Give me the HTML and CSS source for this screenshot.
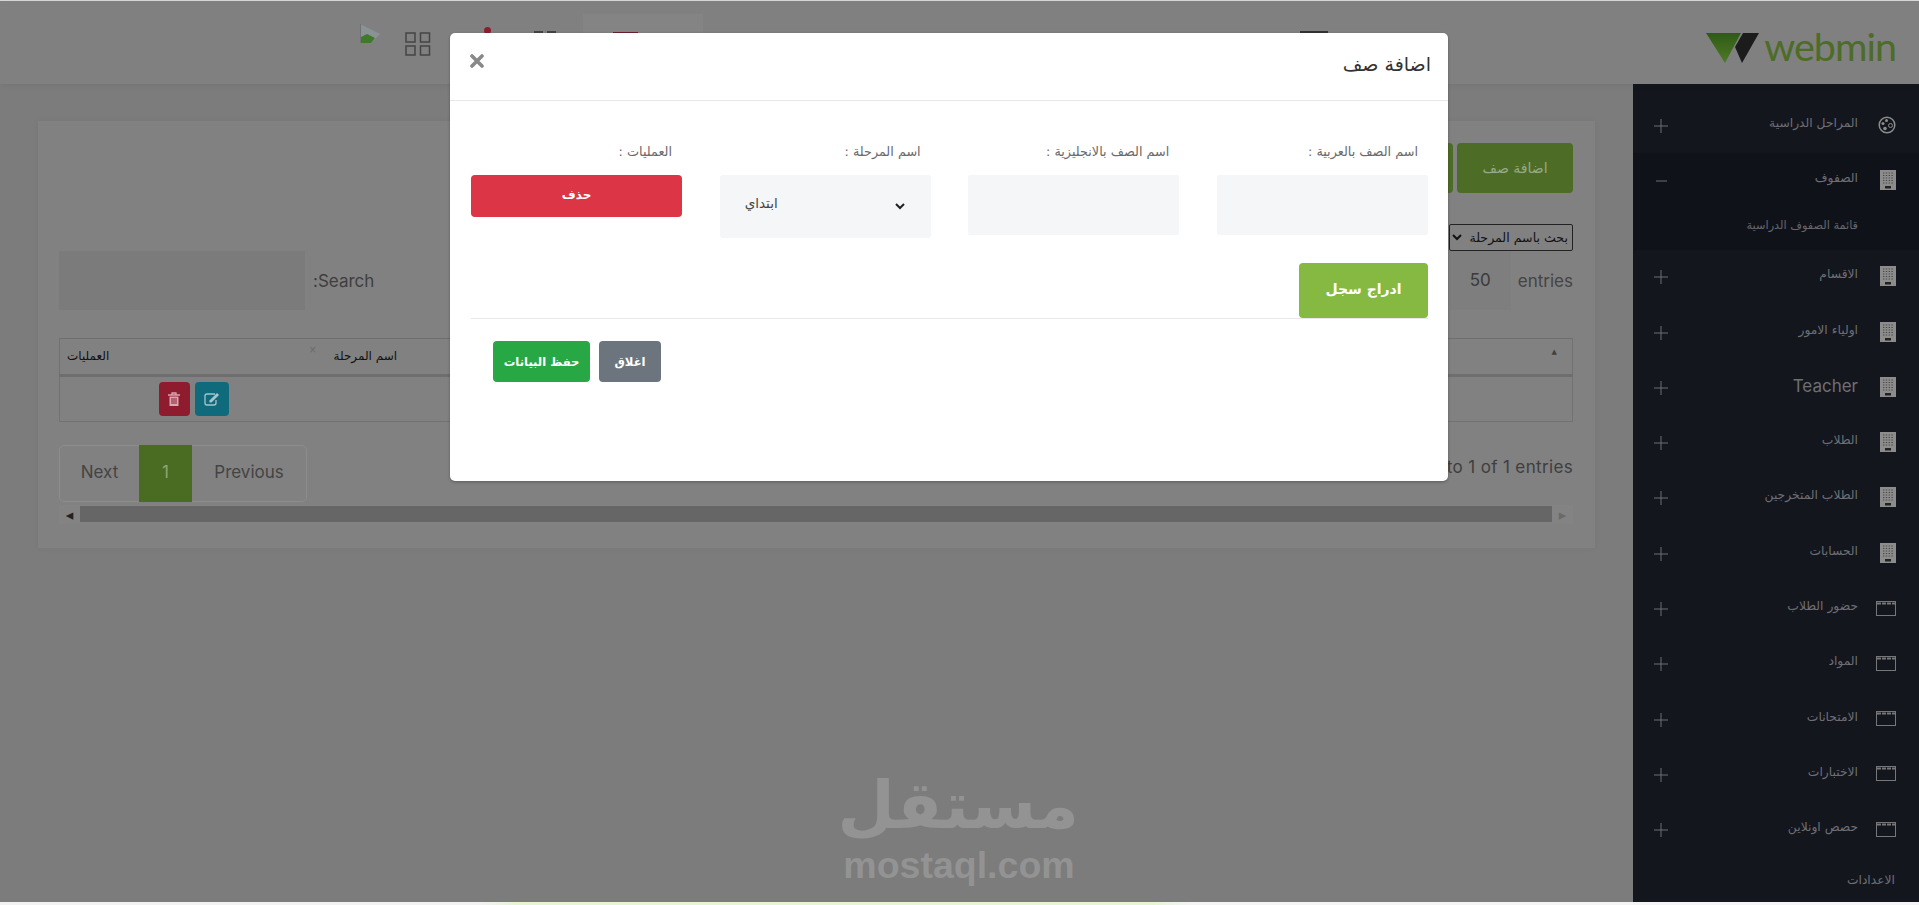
FILE: index.html
```html
<!DOCTYPE html>
<html lang="ar" dir="rtl">
<head>
  <meta charset="UTF-8" />
  <title>webmin</title>
  <link rel="stylesheet" href="styles.css">
</head>
<body>

<svg class="sprite" width="0" height="0">
  <symbol id="i-building" viewBox="0 0 16 20">
    <rect width="16" height="20" fill="#8c8c8c"/>
    <path d="M3 3h10M3 5.500h10M3 8h10M3 10.500h10M3 13h10" stroke="#4a4a4a" stroke-width="1.200" stroke-dasharray="1.400 1.400"/>
    <rect x="5" y="16" width="6" height="2.500" fill="#222"/>
  </symbol>
  <symbol id="i-window" viewBox="0 0 20 15">
    <rect x=".5" y=".5" width="19" height="14" fill="none" stroke="#77777a"/>
    <path d="M1 2.500h18" stroke="#77777a" stroke-width="2" stroke-dasharray="4 1"/>
  </symbol>
  <symbol id="i-palette" viewBox="0 0 18 18">
    <circle cx="9" cy="9" r="7.800" fill="none" stroke="#8c8c8c" stroke-width="1.500"/>
    <circle cx="5" cy="7.500" r="1.500" fill="#8c8c8c"/>
    <circle cx="8.500" cy="4.500" r="1.500" fill="#8c8c8c"/>
    <circle cx="12.500" cy="9.500" r="2" fill="none" stroke="#8c8c8c"/>
    <circle cx="7" cy="12.500" r="1.800" fill="#8c8c8c"/>
  </symbol>
  <symbol id="i-plus" viewBox="0 0 14 14">
    <path d="M0 7h14M7 0v14" stroke="#6e6f73" stroke-width="1"/>
  </symbol>
  <symbol id="i-minus" viewBox="0 0 14 14">
    <path d="M2 7h11" stroke="#6e6f73" stroke-width="1"/>
  </symbol>
</svg>

<div class="top-edge"></div>

<header class="topbar">
  <a class="logo">
    <svg class="logo-mark" width="54" height="31" viewBox="0 0 54 31">
      <defs>
        <linearGradient id="g-green" x1="0" y1="0" x2="0" y2="1">
          <stop offset="0" stop-color="#2f5a14"/>
          <stop offset="1" stop-color="#4f7a28"/>
        </linearGradient>
      </defs>
      <path d="M0 0H35L19 30Z" fill="url(#g-green)"/>
      <path d="M37 0H53L36 30L29 14Z" fill="#1c1c1c"/>
    </svg>
    <span class="logo-text">webmin</span>
  </a>
  <span class="top-dark"></span>
  <div class="top-box"><span class="top-red"></span></div>
  <span class="top-squares"></span>
  <span class="top-dot"></span>
  <svg class="top-grid" width="26" height="24" viewBox="0 0 26 24">
    <path d="M1 1h9v9H1zM15.500 1h9v9h-9zM1 14h9v9H1zM15.500 14h9v9h-9z" fill="none" stroke="#444" stroke-width="1.500"/>
  </svg>
  <svg class="top-broken" width="20" height="20" viewBox="0 0 20 20">
    <path d="M0 0L20 10L11 19H0Z" fill="#8a9296"/>
    <path d="M1 19V13L7 10L15 14L11 19Z" fill="#3f7a2a"/>
    <path d="M0 0V19" stroke="#555" stroke-width="1"/>
  </svg>
</header>

<div class="layout">
  <aside class="sidebar">
    <ul class="menu">
      <li class="menu-item"><svg class="ico ico-round"><use href="#i-palette"/></svg><span class="menu-label">المراحل الدراسية</span><svg class="toggle"><use href="#i-plus"/></svg></li>
      <li class="menu-group">
        <div class="menu-item"><svg class="ico"><use href="#i-building"/></svg><span class="menu-label">الصفوف</span><svg class="toggle"><use href="#i-minus"/></svg></div>
        <div class="submenu">قائمة الصفوف الدراسية</div>
      </li>
      <li class="menu-item"><svg class="ico"><use href="#i-building"/></svg><span class="menu-label">الاقسام</span><svg class="toggle"><use href="#i-plus"/></svg></li>
      <li class="menu-item"><svg class="ico"><use href="#i-building"/></svg><span class="menu-label">اولياء الامور</span><svg class="toggle"><use href="#i-plus"/></svg></li>
      <li class="menu-item"><svg class="ico"><use href="#i-building"/></svg><span class="menu-label menu-latin">Teacher</span><svg class="toggle"><use href="#i-plus"/></svg></li>
      <li class="menu-item"><svg class="ico"><use href="#i-building"/></svg><span class="menu-label">الطلاب</span><svg class="toggle"><use href="#i-plus"/></svg></li>
      <li class="menu-item"><svg class="ico"><use href="#i-building"/></svg><span class="menu-label">الطلاب المتخرجين</span><svg class="toggle"><use href="#i-plus"/></svg></li>
      <li class="menu-item"><svg class="ico"><use href="#i-building"/></svg><span class="menu-label">الحسابات</span><svg class="toggle"><use href="#i-plus"/></svg></li>
      <li class="menu-item"><svg class="ico ico-wide"><use href="#i-window"/></svg><span class="menu-label">حضور الطلاب</span><svg class="toggle"><use href="#i-plus"/></svg></li>
      <li class="menu-item"><svg class="ico ico-wide"><use href="#i-window"/></svg><span class="menu-label">المواد</span><svg class="toggle"><use href="#i-plus"/></svg></li>
      <li class="menu-item"><svg class="ico ico-wide"><use href="#i-window"/></svg><span class="menu-label">الامتحانات</span><svg class="toggle"><use href="#i-plus"/></svg></li>
      <li class="menu-item"><svg class="ico ico-wide"><use href="#i-window"/></svg><span class="menu-label">الاختبارات</span><svg class="toggle"><use href="#i-plus"/></svg></li>
      <li class="menu-item"><svg class="ico ico-wide"><use href="#i-window"/></svg><span class="menu-label">حصص اونلاين</span><svg class="toggle"><use href="#i-plus"/></svg></li>
      <li class="menu-plain">الاعدادات</li>
    </ul>
  </aside>

  <main class="content">
    <section class="card">
      <div class="card-actions">
        <button class="btn-add">اضافة صف</button>
        <button class="btn-add btn-add-2">استيراد</button>
      </div>

      <div class="filter-row">
        <select class="filter-select">
          <option>بحث باسم المرحلة</option>
        </select>
      </div>

      <div class="table-tools">
        <div class="length">
          <span>entries</span>
          <span class="length-value">50</span>
          <span>Show</span>
        </div>
        <label class="search">Search:<span class="search-box"></span></label>
      </div>

      <table class="grid">
        <thead>
          <tr>
            <th>اسم الصف<span class="sort sort-up">▲</span></th>
            <th>اسم الصف بالانجليزية</th>
            <th class="col-stage">اسم المرحلة<span class="sort">×</span></th>
            <th class="col-ops">العمليات</th>
          </tr>
        </thead>
        <tbody>
          <tr>
            <td></td>
            <td></td>
            <td class="col-stage"></td>
            <td class="col-ops">
              <div class="row-actions">
                <button class="icon-btn icon-edit">
                  <svg width="16" height="14" viewBox="0 0 16 14"><path d="M11 2H3a2 2 0 0 0-2 2v7a2 2 0 0 0 2 2h7a2 2 0 0 0 2-2V8" fill="none" stroke="#a8c4cc" stroke-width="1.300"/><path d="M5.500 8.500L13 1l2 2L7.500 10.500H5.500Z" fill="#a8c4cc"/></svg>
                </button>
                <button class="icon-btn icon-del">
                  <svg width="12" height="14" viewBox="0 0 12 14"><path d="M0 3h12M4 3V1h4v2" fill="none" stroke="#d8a8b0" stroke-width="1.300"/><path d="M1.500 4.500h9V14h-9z" fill="#d8a8b0"/><path d="M4 6v6M6 6v6M8 6v6" stroke="#8f1b2e" stroke-width="1"/></svg>
                </button>
              </div>
            </td>
          </tr>
        </tbody>
      </table>

      <div class="table-foot">
        <div class="info">Showing 1 to 1 of 1 entries</div>
        <div class="pager">
          <a class="page-link">Previous</a>
          <a class="page-link page-active">1</a>
          <a class="page-link">Next</a>
        </div>
      </div>

      <div class="hscroll">
        <span class="hscroll-arrow">▸</span>
        <span class="hscroll-thumb"></span>
        <span class="hscroll-arrow hscroll-dark">◂</span>
      </div>
    </section>
  </main>
</div>

<div class="bottom-edge"></div>

<div class="watermark">
  <div class="wm-ar">مستقل</div>
  <div class="wm-en">mostaql.com</div>
</div>

<div class="modal">
  <div class="modal-head">
    <h4 class="modal-title">اضافة صف</h4>
    <svg class="modal-close" width="14" height="14" viewBox="0 0 14 14"><path d="M2 2L12 12M12 2L2 12" stroke="#888" stroke-width="3.600" stroke-linecap="round"/></svg>
  </div>

  <div class="modal-body">
    <div class="form-row">
      <div class="field">
        <label>اسم الصف بالعربية :</label>
        <input type="text" class="input">
      </div>
      <div class="field">
        <label>اسم الصف بالانجليزية :</label>
        <input type="text" class="input">
      </div>
      <div class="field">
        <label>اسم المرحلة :</label>
        <div class="stage-wrap">
          <select class="stage" dir="ltr"><option>ابتداي</option></select>
          <svg class="stage-arrow" width="10" height="7" viewBox="0 0 10 7"><path d="M1 1L5 5L9 1" fill="none" stroke="#222" stroke-width="2"/></svg>
        </div>
      </div>
      <div class="field">
        <label>العمليات :</label>
        <button class="btn-delete">حذف</button>
      </div>
    </div>

    <div class="insert-row">
      <button class="btn-insert">ادراج سجل</button>
    </div>
  </div>

  <div class="modal-foot">
    <button class="btn btn-grey">اغلاق</button>
    <button class="btn btn-green">حفظ البيانات</button>
  </div>
</div>

</body>
</html>
```

FILE: styles.css
```css
* {
  box-sizing: border-box;
}

html, body {
  height: 100%;
}

body {
  margin: 0;
  display: flex;
  flex-direction: column;
  height: 905px;
  overflow: hidden;
  position: relative;
  background: #7c7c7c;
  color: #3c3c3c;
  font-family: "DejaVu Sans", sans-serif;
}

button, select, input {
  font-family: inherit;
}

.sprite {
  position: absolute;
}

.top-edge {
  height: 1px;
  background: #d8d8d8;
}

.bottom-edge {
  height: 3px;
  background: linear-gradient(to right, #f2f2f2 25%, #e6f5d3 27%, #e6f5d3 60%, #f4f4f4 62%);
}

/* header */
.topbar {
  height: 83px;
  flex: none;
  display: flex;
  align-items: flex-start;
  padding-right: 23px;
  background: #808080;
  box-shadow: 0 2px 6px rgba(0,0,0,.06);
  position: relative;
}

.logo {
  display: flex;
  flex-direction: row-reverse;
  justify-content: flex-end;
  align-items: flex-start;
  width: 189px;
  margin-top: 24px;
  gap: 4px;
}

.logo-mark {
  margin-top: 8px;
  flex: none;
}

.logo-text {
  font-family: "Lato", sans-serif;
  font-size: 39.500px;
  line-height: 42px;
  letter-spacing: -1px;
  color: #4c6c28;
  direction: ltr;
}

.top-dark {
  width: 28px;
  height: 20px;
  margin: 30px 379px 0 0;
  background: #333;
}

.top-box {
  width: 120px;
  height: 50px;
  margin: 13px 597px 0 0;
  padding: 18px 65px 0 0;
  background: #848484;
}

.top-red {
  display: block;
  width: 25px;
  height: 20px;
  background: #6c1f2c;
}

.top-squares {
  width: 22px;
  height: 4px;
  margin: 30px 27px 0 0;
  background: linear-gradient(to right, #444 9px, transparent 9px, transparent 13px, #444 13px);
}

.top-dot {
  width: 7px;
  height: 7px;
  margin: 26px 43px 0 0;
  border-radius: 50%;
  background: #8f1b2e;
}

.top-grid {
  margin: 31px 53px 0 0;
}

.top-broken {
  margin: 23px 25px 0 0;
}

.layout {
  flex: 1;
  display: flex;
  min-height: 0;
}

/* sidebar */
.sidebar {
  width: 286px;
  flex: none;
  background: #14161e;
  padding-top: 14px;
  overflow: hidden;
}

.menu {
  list-style: none;
  margin: 0;
  padding: 0;
}

.menu-item {
  height: 55.300px;
  display: flex;
  align-items: center;
  padding: 0 23px 0 0;
}

.ico {
  width: 16px;
  height: 20px;
  flex: none;
  margin-bottom: 2px;
}

.ico-round {
  width: 18px;
  height: 18px;
}

.ico-wide {
  width: 20px;
  height: 15px;
}

.menu-label {
  flex: 1;
  margin-right: 22px;
  padding-bottom: 6px;
  font-size: 12.300px;
  color: #6e6f75;
}

.ico-round + .menu-label {
  margin-right: 20px;
}

.ico-wide + .menu-label {
  margin-right: 18px;
}

.menu-latin {
  font-family: "Inter", sans-serif;
  font-size: 17px;
  font-weight: 400;
  padding-bottom: 3px;
}

.toggle {
  width: 14px;
  height: 14px;
  flex: none;
  margin-left: 21px;
}

.menu-group {
  background: #10121a;
}

.submenu {
  height: 41px;
  padding: 0 61px 0 0;
  font-size: 11.300px;
  line-height: 34px;
  color: #66676c;
}

.menu-plain {
  padding: 15px 24px 0 0;
  font-size: 12.300px;
  color: #6e6f75;
}

/* page card */
.content {
  flex: 1;
  min-width: 0;
  padding: 37px 38px 0 38px;
}

.card {
  height: 427px;
  background: #818181;
  padding: 22px 22px 0 21px;
  box-shadow: 0 0 6px rgba(0,0,0,.06);
}

.card-actions {
  display: flex;
  gap: 4px;
  height: 50px;
}

.btn-add {
  width: 116px;
  height: 50px;
  border: none;
  border-radius: 4px;
  background: #4d6d26;
  color: #9aa98a;
  font-size: 14px;
}

.filter-row {
  margin-top: 31px;
  height: 27px;
}

.filter-select {
  width: 124px;
  height: 27px;
  background: transparent;
  border: 1px solid #222;
  border-radius: 2px;
  color: #111;
  font-size: 12.600px;
}

.table-tools {
  display: flex;
  justify-content: space-between;
  align-items: center;
  height: 59px;
  font-family: "Inter", sans-serif;
  font-size: 17px;
  color: #3e3e3e;
}

.length {
  display: flex;
  align-items: center;
  gap: 7px;
  color: #444;
}

.length-value {
  width: 61px;
  height: 59px;
  line-height: 59px;
  text-align: center;
  background: #7e7e7e;
  color: #3a3a3a;
}

.search {
  display: flex;
  align-items: center;
  gap: 8px;
}

.search-box {
  width: 246px;
  height: 59px;
  background: #7b7b7b;
}

/* table */
.grid {
  width: 100%;
  margin-top: 28px;
  border-collapse: collapse;
  table-layout: fixed;
  font-size: 12px;
}

.grid th, .grid td {
  border-top: 1px solid #6e6e6e;
  border-left: 1px solid #727272;
  border-right: 1px solid #727272;
  text-align: left;
  padding: 0 0 0 7px;
  position: relative;
}

.grid th {
  height: 37px;
  padding-bottom: 2px;
  color: #111;
  font-weight: 400;
  border-left: none;
  border-right: none;
  border-bottom: 3px solid #6e6e6e;
}

.grid th:first-child, .grid td:first-child {
  border-right: 1px solid #727272;
}

.grid th:last-child, .grid td:last-child {
  border-left: 1px solid #727272;
}

.grid td {
  height: 46px;
  border: none;
  border-bottom: 1px solid #727272;
}

.col-ops {
  width: 261px;
}

.col-stage {
  width: 370px;
}

.grid th.col-stage {
  padding-left: 13px;
}

.sort {
  position: absolute;
  top: 5px;
  right: 7px;
  font-size: 10px;
  color: #6c6c6c;
}

.sort-up {
  right: 15px;
  top: 9px;
  font-size: 7px;
  color: #404040;
}

.grid .sort:not(.sort-up) {
  right: auto;
  left: -12px;
}

.row-actions {
  display: flex;
  gap: 5px;
  padding-right: 92px;
}

.icon-btn {
  height: 34px;
  border: none;
  border-radius: 4px;
  padding: 0;
  display: flex;
  align-items: center;
  justify-content: center;
}

.icon-edit {
  width: 34px;
  background: #0f6a7c;
}

.icon-del {
  width: 31px;
  background: #8f1b2e;
}

/* footer of the table */
.table-foot {
  display: flex;
  justify-content: space-between;
  align-items: flex-start;
  margin-top: 23px;
  height: 57px;
  font-family: "Inter", sans-serif;
  font-size: 17px;
  color: #3e3e3e;
}

.info {
  margin-top: 12px;
  letter-spacing: .35px;
}

.pager {
  display: flex;
  height: 57px;
  width: 248px;
  padding-bottom: 0;
  border: 1px solid #8d8d8d;
  border-radius: 5px;
  align-items: stretch;
}

.page-link {
  display: flex;
  align-items: center;
  justify-content: center;
  padding-bottom: 4px;
  color: #444;
}

.page-link:first-child {
  width: 114px;
}

.page-link:last-child {
  flex: 1;
}

.page-active {
  width: 53px;
  margin: -1px 0;
  background: #4a6b22;
  color: #8da86e;
}

.hscroll {
  display: flex;
  align-items: stretch;
  height: 19px;
  margin-top: 3px;
  font-size: 15px;
  background: #838383;
}

.hscroll-arrow {
  width: 21px;
  display: flex;
  align-items: center;
  justify-content: center;
  color: #6a6a6a;
}

.hscroll-dark {
  color: #222;
}

.hscroll-thumb {
  flex: 1;
  background: #666;
  margin: 1px 0 2px;
}

/* mostaql watermark, on top of the page and under the dialog */
.watermark {
  position: absolute;
  left: 839px;
  top: 765px;
  width: 240px;
  text-align: center;
  color: #939393;
  font-weight: 700;
}

.wm-ar {
  font-size: 66px;
  line-height: 82px;
}

.wm-en {
  font-family: "Liberation Sans", sans-serif;
  font-size: 37.500px;
  line-height: 36px;
  direction: ltr;
}

/* dialog */
.modal {
  position: absolute;
  left: 450px;
  top: 33px;
  width: 998px;
  height: 448px;
  background: #fff;
  border-radius: 5px;
  box-shadow: 0 1px 3px rgba(0,0,0,.3);
  color: #333;
}

.modal-head {
  height: 68px;
  display: flex;
  align-items: center;
  justify-content: space-between;
  padding: 0 17px 6px 20px;
  border-bottom: 1px solid #e6e6e6;
}

.modal-title {
  margin: 0;
  font-size: 19px;
  font-weight: 400;
  color: #333;
}

.modal-close {
  margin-bottom: 6px;
}

.modal-body {
  padding: 0 20px;
}

.form-row {
  display: grid;
  grid-template-columns: 211px 211px 211px 211px;
  column-gap: 37.660px;
  padding-top: 42px;
  height: 162px;
}

.field label {
  display: block;
  height: 32px;
  padding: 0 10px;
  font-size: 12.800px;
  line-height: 18px;
  color: #6a6a6a;
}

.input {
  display: block;
  width: 211px;
  height: 60px;
  border: none;
  border-radius: 2px;
  background: #f5f6f8;
}

.stage-wrap {
  position: relative;
}

.stage {
  display: block;
  width: 211px;
  height: 63px;
  border: none;
  border-radius: 3px;
  background: #f5f6f8;
  color: #444;
  font-size: 13.500px;
  padding: 0 25px 8px;
  appearance: none;
}

.stage-arrow {
  position: absolute;
  top: 28px;
  right: 26px;
}

.btn-delete {
  display: block;
  width: 211px;
  height: 42px;
  border: none;
  border-radius: 4px;
  padding-bottom: 4px;
  background: #dc3545;
  color: #fff;
  font-size: 12px;
  font-weight: 700;
}

.insert-row {
  height: 56px;
  border-bottom: 1px solid #e8e8e8;
  margin-left: 1px;
}

.btn-insert {
  display: block;
  width: 129px;
  height: 55px;
  border: none;
  border-radius: 4px;
  padding-bottom: 5px;
  background: #85b941;
  color: #fff;
  font-size: 14px;
  font-weight: 700;
}

.modal-foot {
  display: flex;
  gap: 9px;
  padding: 22px 0 0 0;
  justify-content: flex-end;
  margin-left: 43px;
}

.btn {
  height: 41px;
  border: none;
  border-radius: 4px;
  color: #fff;
  font-size: 11.600px;
  font-weight: 700;
}

.btn-grey {
  width: 62px;
  background: #6c757d;
}

.btn-green {
  width: 97px;
  background: #28a745;
}
```
